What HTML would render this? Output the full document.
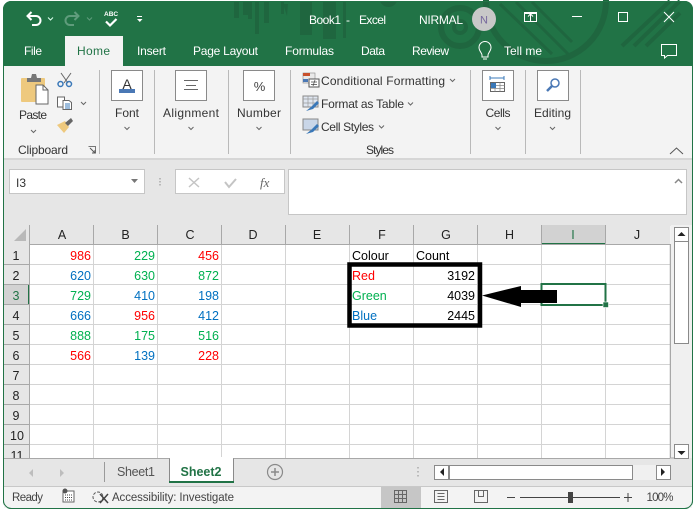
<!DOCTYPE html>
<html><head><meta charset="utf-8"><style>
html,body{margin:0;padding:0;background:#fff;width:699px;height:513px;overflow:hidden}
svg{display:block}
text{font-family:"Liberation Sans",sans-serif;font-size:12px;fill:#333}
.w{fill:#fff}
.c{font-size:12.5px;text-anchor:end}
.m{text-anchor:middle}
.h{font-size:12.5px;text-anchor:middle;fill:#222}
.r{fill:#f00}.g{fill:#00b050}.b{fill:#0070c0}.k{fill:#000}
.ic{fill:none;stroke:#666;stroke-width:1}
</style></head><body>
<svg width="699" height="513" viewBox="0 0 699 513" xmlns="http://www.w3.org/2000/svg">
<rect width="699" height="513" fill="#fff"/>
<!-- window -->
<rect x="3" y="1" width="690" height="508" rx="8" fill="#217346"/>
<rect x="4" y="66" width="688" height="442" fill="#f3f3f3"/>
<!-- title pattern -->
<g fill="#1f663f">
<rect x="234" y="1" width="5" height="17"/><rect x="243" y="1" width="5" height="14"/><rect x="248" y="1" width="4" height="18"/><rect x="255" y="1" width="4" height="33"/><rect x="264" y="1" width="5" height="22"/><rect x="281" y="1" width="3" height="13"/><rect x="300" y="1" width="12" height="34"/><rect x="323" y="1" width="13" height="38"/><rect x="343" y="1" width="3" height="37"/>
<path d="M283 4l5 0 -1 12z"/><path d="M380 1h17a9 9 0 0 1-17 0z"/>
</g>
<g fill="none" stroke="#1f663f">
<circle cx="460" cy="27" r="19" stroke-width="6"/>
<circle cx="460" cy="27" r="6" stroke-width="4"/>
<path d="M500 4l52 50M516 2l52 52M532 2l40 40" stroke-width="3"/>
<circle cx="546" cy="1" r="60" stroke-width="6"/>
<path d="M622 46l48-45M634 46l46-45M646 46l34-33" stroke-width="4"/>
</g>
<!-- QAT -->
<g fill="none" stroke="#fff" stroke-width="2">
<path d="M28 16h8a4.500 4.500 0 0 1 0 9h-4"/><path d="M31.500 12l-4 4 4 4"/>
</g>
<path d="M48 17.500l2.500 2.500 2.500-2.500" fill="none" stroke="#dfe" stroke-width="1"/>
<g fill="none" stroke="#5f9c7c" stroke-width="2">
<path d="M78 16h-8a4.500 4.500 0 0 0 0 9h4"/><path d="M74.500 12l4 4-4 4"/>
</g>
<path d="M87 17.500l2.500 2.500 2.500-2.500" fill="none" stroke="#5f9c7c" stroke-width="1"/>
<text x="104" y="16" class="w" style="font-size:6.500px;font-weight:bold">ABC</text>
<path d="M106 21.500l4 4 6.500-6.500" fill="none" stroke="#fff" stroke-width="2.200"/>
<path d="M137 16.500h5" stroke="#fff"/><path d="M137 19h5.500l-2.700 3z" fill="#fff"/>
<text x="309" y="24" class="w" textLength="32">Book1</text><text x="346" y="24" class="w">-</text><text x="359" y="24" class="w" textLength="27">Excel</text>
<text x="419" y="24" class="w" textLength="44">NIRMAL</text>
<circle cx="484" cy="19" r="12" fill="#c8c8c8"/>
<text x="484" y="23.500" class="m" style="fill:#76689c;font-size:11px">N</text>
<!-- window controls -->
<g fill="none" stroke="#fff" stroke-width="1">
<rect x="524.500" y="12.500" width="12" height="9"/><path d="M528 16.500l2.500-2.500 2.500 2.500M530.500 14v7M524.500 13.500h12"/>
<path d="M572 16.500h10"/><rect x="618.500" y="12.500" width="9" height="9"/>
<path d="M664 12l10 10M674 12l-10 10"/>
</g>
<!-- tabs -->
<rect x="65" y="36" width="58" height="31" fill="#f3f3f3"/>
<text x="24" y="55" class="w" textLength="18">File</text>
<text x="77" y="55" style="fill:#217346" textLength="33">Home</text>
<text x="137" y="55" class="w" textLength="29">Insert</text>
<text x="193" y="55" class="w" textLength="65">Page Layout</text>
<text x="285" y="55" class="w" textLength="49">Formulas</text>
<text x="361" y="55" class="w" textLength="24">Data</text>
<text x="412" y="55" class="w" textLength="37">Review</text>
<g fill="none" stroke="#fff" stroke-width="1">
<path d="M482 57v-2c0-2-3-4-3-7.500a6 6 0 0 1 12 0c0 3.500-3 5.500-3 7.500v2zM483 59h4"/>
<path d="M661.500 44.500h15v11h-9l-3 2.500v-2.500h-3z"/>
</g>
<text x="504" y="55" class="w" textLength="38">Tell me</text>
<!-- ribbon -->
<g fill="#b9b9b9">
<rect x="99" y="70" width="1" height="84"/><rect x="154" y="70" width="1" height="84"/><rect x="228" y="70" width="1" height="84"/><rect x="290" y="70" width="1" height="84"/><rect x="470" y="70" width="1" height="84"/><rect x="525" y="70" width="1" height="84"/><rect x="580" y="70" width="1" height="84"/>
</g>
<!-- paste -->
<rect x="21" y="78" width="24" height="24" rx="1" fill="#eec97e"/>
<path d="M27 82v-4h4l1-4h4l1 4h4v4z" fill="#777"/>
<path d="M36 85h7l5 5v14H36z" fill="#fff" stroke="#666"/>
<path d="M43 85v5h5" fill="none" stroke="#666"/>
<text x="33" y="119" class="m" textLength="28">Paste</text>
<path d="M31 130l2.500 2.500 2.500-2.500" class="ic"/>
<!-- scissors -->
<g fill="none" stroke="#666"><path d="M61 73l7 10M71 73l-7 10"/></g>
<g fill="none" stroke="#3a78b8"><circle cx="60.500" cy="84" r="2.500" stroke-width="1.500"/><circle cx="69" cy="84" r="2.500" stroke-width="1.500"/></g>
<!-- copy -->
<path d="M57.500 97h7v10h-7z" fill="#fff" stroke="#666"/>
<path d="M63 100.500h6l2.500 2v7h-8.500z" fill="#fff" stroke="#666"/>
<path d="M65 104h5M65 106h5M65 108h5" stroke="#3a78b8"/>
<path d="M81 102l2.500 2.500 2.500-2.500" class="ic"/>
<!-- painter -->
<path d="M57 125l8-4 4 6-5 6z" fill="#eec97e"/><path d="M65 123l6-5 2 3-5 5z" fill="#666"/>
<text x="18" y="154" textLength="50">Clipboard</text>
<path d="M88.500 146.500h7v7" fill="none" stroke="#777"/>
<path d="M90 148l5 5M95 150v3h-3" fill="none" stroke="#555"/>
<!-- font -->
<rect x="111.500" y="70.500" width="31" height="30" fill="#fff" stroke="#8a8a8a"/>
<text x="127" y="89" class="m" style="font-size:14px;fill:#333">A</text>
<rect x="119" y="89" width="16" height="4" fill="#4a78b5"/>
<text x="127" y="117" class="m" textLength="24">Font</text>
<path d="M124.500 127l2.500 2.500 2.500-2.500" class="ic"/>
<!-- alignment -->
<rect x="175.500" y="70.500" width="31" height="30" fill="#fff" stroke="#8a8a8a"/>
<path d="M184 80.500h14M186 85.500h10M184 89.500h14" stroke="#666"/>
<text x="191" y="117" class="m" textLength="56">Alignment</text>
<path d="M188.500 127l2.500 2.500 2.500-2.500" class="ic"/>
<!-- number -->
<rect x="243.500" y="70.500" width="31" height="30" fill="#fff" stroke="#8a8a8a"/>
<text x="259.500" y="91" class="m" style="font-size:13px;fill:#444">%</text>
<text x="259" y="117" class="m" textLength="44">Number</text>
<path d="M256.500 127l2.500 2.500 2.500-2.500" class="ic"/>
<!-- styles -->
<rect x="303" y="73" width="12" height="10" fill="#e9e9e9" stroke="#888" stroke-width=".6"/>
<rect x="303" y="73" width="7" height="3" fill="#c8502c"/><rect x="303" y="79" width="5" height="3" fill="#4a78b5"/>
<rect x="309" y="79" width="10" height="8" fill="#fff" stroke="#555"/><path d="M311 82h6M311 84.500h6M315 80l-2 6" stroke="#444" stroke-width=".7"/>
<text x="321" y="85" textLength="124">Conditional Formatting</text>
<path d="M450 79l2.500 2.500 2.500-2.500" class="ic"/>
<path d="M303 96h15v11h-15z" fill="#dfe6f0" stroke="#888"/>
<path d="M303 99h15M308 96v11M313 96v11M303 103h15" stroke="#999" stroke-width=".7"/>
<path d="M306 111l5-4 6-6 2 2-6 6z" fill="#3a78b8"/>
<text x="321" y="108" textLength="83">Format as Table</text>
<path d="M408 102.500l2.500 2.500 2.500-2.500" class="ic"/>
<path d="M303 119h15v11h-15z" fill="#c9d6e8" stroke="#888"/>
<path d="M306 134l5-4 6-6 2 2-6 6z" fill="#3a78b8"/>
<text x="321" y="131" textLength="53">Cell Styles</text>
<path d="M379 125.500l2.500 2.500 2.500-2.500" class="ic"/>
<text x="380" y="154" class="m" textLength="28">Styles</text>
<!-- cells -->
<rect x="482.500" y="70.500" width="31" height="30" fill="#fff" stroke="#8a8a8a"/>
<path d="M490 78h14M490 76v4M504 76v4" stroke="#3a78b8"/>
<rect x="490.500" y="82.500" width="14" height="9" fill="#fff" stroke="#666"/>
<path d="M490.500 85.500h14M490.500 88.500h14M495 82.500v9M500 82.500v9" stroke="#888" stroke-width=".7"/>
<rect x="491" y="83" width="5" height="5" fill="#3a78b8"/>
<text x="498" y="117" class="m" textLength="25">Cells</text>
<path d="M495.500 127l2.500 2.500 2.500-2.500" class="ic"/>
<!-- editing -->
<rect x="537.500" y="70.500" width="31" height="30" fill="#fff" stroke="#8a8a8a"/>
<circle cx="555" cy="83" r="4" fill="none" stroke="#4a78b5" stroke-width="1.500"/>
<path d="M552 86l-5 5" stroke="#4a78b5" stroke-width="2.500"/>
<text x="552.500" y="117" class="m" textLength="37">Editing</text>
<path d="M550 127l2.500 2.500 2.500-2.500" class="ic"/>
<path d="M670 154l6.500-6 6.500 6" fill="none" stroke="#555"/>
<!-- formula area -->
<rect x="4" y="158" width="688" height="2" fill="#d6d6d6"/>
<rect x="4" y="160" width="688" height="66" fill="#e6e6e6"/>
<rect x="9.500" y="169.500" width="135" height="24" fill="#fff" stroke="#c6c6c6"/>
<text x="16" y="187" style="fill:#333">I3</text>
<path d="M131 179h7l-3.500 4z" fill="#777"/>
<path d="M160 178v1.500M160 181v1.500M160 184v1.500" stroke="#aaa" stroke-width="1.500"/>
<rect x="175.500" y="169.500" width="109" height="24" fill="#fff" stroke="#c6c6c6"/>
<path d="M189 178l10 9M199 178l-10 9" stroke="#c4c4c4" stroke-width="1.500"/>
<path d="M225 182l4 5 7-8" fill="none" stroke="#c4c4c4" stroke-width="2"/>
<text x="260" y="187" style="font-family:'Liberation Serif',serif;font-style:italic;font-size:13px;fill:#666">fx</text>
<rect x="288.500" y="169.500" width="398" height="45" fill="#fff" stroke="#c6c6c6"/>
<path d="M675 183l3.500-3.500 3.500 3.500" fill="none" stroke="#888" stroke-width="1.500"/>
<!-- sheet -->
<rect x="29" y="245" width="641" height="213" fill="#fff"/>
<rect x="4" y="225" width="666" height="19" fill="#e6e6e6"/>
<rect x="4" y="244" width="25" height="214" fill="#e6e6e6"/>
<rect x="541" y="225" width="64" height="19" fill="#d2d2d2"/>
<rect x="541" y="243" width="64" height="2" fill="#217346"/>
<rect x="4" y="285" width="25" height="19" fill="#d2d2d2"/>
<rect x="28" y="285" width="2" height="20" fill="#217346"/>
<path d="M14 241l12-12v12z" fill="#b9b9b9"/>
<g stroke="#d4d4d4" stroke-width="1">
<path d="M29.500 264.500H670M29.500 284.500H670M29.500 304.500H670M29.500 324.500H670M29.500 344.500H670M29.500 364.500H670M29.500 384.500H670M29.500 404.500H670M29.500 424.500H670M29.500 444.500H670"/>
<path d="M93.500 244V458M157.500 244V458M221.500 244V458M285.500 244V458M349.500 244V458M413.500 244V458M477.500 244V458M541.500 244V458M605.500 244V458"/>
</g>
<g stroke="#a8a8a8" stroke-width="1">
<path d="M29 244.500H670M29.500 225V458"/>
<path d="M93.500 225V244M157.500 225V244M221.500 225V244M285.500 225V244M349.500 225V244M413.500 225V244M477.500 225V244M541.500 225V244M605.500 225V244"/>
<path d="M4 264.500H29M4 284.500H29M4 304.500H29M4 324.500H29M4 344.500H29M4 364.500H29M4 384.500H29M4 404.500H29M4 424.500H29M4 444.500H29"/>
<path d="M670.500 244V458" stroke-width="1.500"/>
</g>
<text x="62" y="239" class="h">A</text><text x="125.500" y="239" class="h">B</text><text x="190" y="239" class="h">C</text><text x="253" y="239" class="h">D</text><text x="317" y="239" class="h">E</text><text x="382" y="239" class="h">F</text><text x="446" y="239" class="h">G</text><text x="509.500" y="239" class="h">H</text><text x="573" y="239" class="h" style="fill:#217346">I</text><text x="637" y="239" class="h">J</text>
<text x="16" y="260" class="h">1</text><text x="16" y="280" class="h">2</text><text x="16" y="300" class="h" style="fill:#217346">3</text><text x="16" y="320" class="h">4</text><text x="16" y="340" class="h">5</text><text x="16" y="360" class="h">6</text><text x="16" y="380" class="h">7</text><text x="16" y="400" class="h">8</text><text x="16" y="420" class="h">9</text><text x="17" y="440" class="h">10</text><text x="17" y="460" class="h">11</text>
<rect x="4" y="458" width="688" height="50" fill="#e6e6e6"/>
<!-- data -->
<text x="91" y="260" class="c r">986</text><text x="155" y="260" class="c g">229</text><text x="219" y="260" class="c r">456</text>
<text x="91" y="280" class="c b">620</text><text x="155" y="280" class="c g">630</text><text x="219" y="280" class="c g">872</text>
<text x="91" y="300" class="c g">729</text><text x="155" y="300" class="c b">410</text><text x="219" y="300" class="c b">198</text>
<text x="91" y="320" class="c b">666</text><text x="155" y="320" class="c r">956</text><text x="219" y="320" class="c b">412</text>
<text x="91" y="340" class="c g">888</text><text x="155" y="340" class="c g">175</text><text x="219" y="340" class="c g">516</text>
<text x="91" y="360" class="c r">566</text><text x="155" y="360" class="c b">139</text><text x="219" y="360" class="c r">228</text>
<text x="352" y="260" class="k" style="font-size:12.500px">Colour</text><text x="416" y="260" class="k" style="font-size:12.500px">Count</text>
<text x="352" y="280" class="r" style="font-size:12.500px">Red</text><text x="475" y="280" class="c k">3192</text>
<text x="352" y="300" class="g" style="font-size:12.500px">Green</text><text x="475" y="300" class="c k">4039</text>
<text x="352" y="320" class="b" style="font-size:12.500px">Blue</text><text x="475" y="320" class="c k">2445</text>
<!-- black box -->
<rect x="349.500" y="264.500" width="130.500" height="61" fill="none" stroke="#000" stroke-width="4.500"/>
<!-- selection -->
<rect x="541.500" y="284" width="64" height="21" fill="none" stroke="#217346" stroke-width="2"/>
<rect x="603" y="302" width="5.500" height="5.500" fill="#217346" stroke="#fff" stroke-width=".6"/>
<!-- arrow -->
<path d="M482 295.500L521 286V290H557V303H521V307z" fill="#000"/>
<!-- vertical scrollbar -->
<rect x="671" y="225" width="21" height="233" fill="#f0f0f0"/>
<rect x="674.500" y="227.500" width="14" height="14" fill="#fff" stroke="#8a8a8a"/>
<path d="M677.500 236h8l-4-4z" fill="#222"/>
<rect x="674.500" y="241.500" width="14" height="102" fill="#fff" stroke="#8a8a8a"/>
<rect x="674.500" y="444.500" width="14" height="14" fill="#fff" stroke="#8a8a8a"/>
<path d="M677.500 451h8l-4 4z" fill="#222"/>
<path d="M4 458.500H670M670 458h4" stroke="#a8a8a8"/>
<!-- tabs bar -->
<path d="M33 469v8l-4-4zM60 469v8l4-4z" fill="#bdbdbd"/>
<rect x="104" y="462" width="1" height="20" fill="#9a9a9a"/>
<text x="136" y="476" class="m" style="font-size:12.500px;fill:#555" textLength="38">Sheet1</text>
<path d="M169.500 458.500V481.500H233.500V458.500" fill="#fff" stroke="#8a8a8a"/>
<rect x="170" y="457" width="63" height="3" fill="#fff"/>
<rect x="169" y="481" width="65" height="2" fill="#217346"/>
<text x="201" y="476" class="m" style="font-size:12.500px;font-weight:bold;fill:#217346">Sheet2</text>
<circle cx="275" cy="472" r="7.500" fill="none" stroke="#8a8a8a" stroke-width="1.200"/>
<path d="M275 468v8M271 472h8" stroke="#8a8a8a" stroke-width="1.500"/>
<path d="M418 467v1.500M418 471v1.500M418 475v1.500" stroke="#aaa" stroke-width="1.500"/>
<rect x="434.500" y="465.500" width="14" height="14" fill="#fff" stroke="#8a8a8a"/>
<path d="M444 468v8l-4-4z" fill="#222"/>
<rect x="449.500" y="465.500" width="183" height="14" fill="#fff" stroke="#8a8a8a"/>
<rect x="633" y="465" width="23" height="15" fill="#f0f0f0"/>
<rect x="656.500" y="465.500" width="14" height="14" fill="#fff" stroke="#8a8a8a"/>
<path d="M661 468v8l4-4z" fill="#222"/>
<!-- status bar -->
<rect x="4" y="486" width="688" height="1" fill="#c8c8c8"/>
<rect x="4" y="487" width="688" height="21" fill="#f3f3f3"/>
<text x="12" y="501" style="fill:#444;font-size:11.500px" textLength="31">Ready</text>
<circle cx="65" cy="492" r="2.500" fill="#555"/>
<rect x="63" y="491" width="11" height="11" fill="#fff" stroke="#666"/>
<circle cx="65" cy="491" r="2.500" fill="#555"/>
<path d="M65 495h7M65 497.500h7M65 500h7" stroke="#444" stroke-dasharray="1 1"/>
<circle cx="98" cy="497" r="5" fill="none" stroke="#555" stroke-dasharray="3 1.500"/>
<path d="M100 494l8 9M108 494l-8 9" stroke="#444" stroke-width="1.500"/>
<text x="112" y="501" style="fill:#444;font-size:11.500px" textLength="122">Accessibility: Investigate</text>
<rect x="381" y="487" width="40" height="21" fill="#c6c6c6"/>
<g fill="none" stroke="#666" stroke-width="1">
<path d="M394.500 490.500h12v12h-12zM398.500 490.500v12M402.500 490.500v12M394.500 494.500h12M394.500 498.500h12"/>
<rect x="434.500" y="490.500" width="13" height="12"/><path d="M437.500 493.500h7M437.500 496.500h7M437.500 499.500h7"/>
<path d="M474.500 490.500h13v12h-13zM478.500 490.500v6h5v-6"/>
</g>
<path d="M507 497.500h8M520 497.500h100M624 497.500h8M628 493v9" stroke="#444"/>
<rect x="568" y="492" width="5" height="11" fill="#444"/>
<text x="646.500" y="501" style="fill:#444;font-size:11.500px" textLength="27">100%</text>
<!-- window border -->
<rect x="3.500" y="1.500" width="689" height="507" rx="8" fill="none" stroke="#217346" stroke-width="1"/>
</svg>
</body></html>
